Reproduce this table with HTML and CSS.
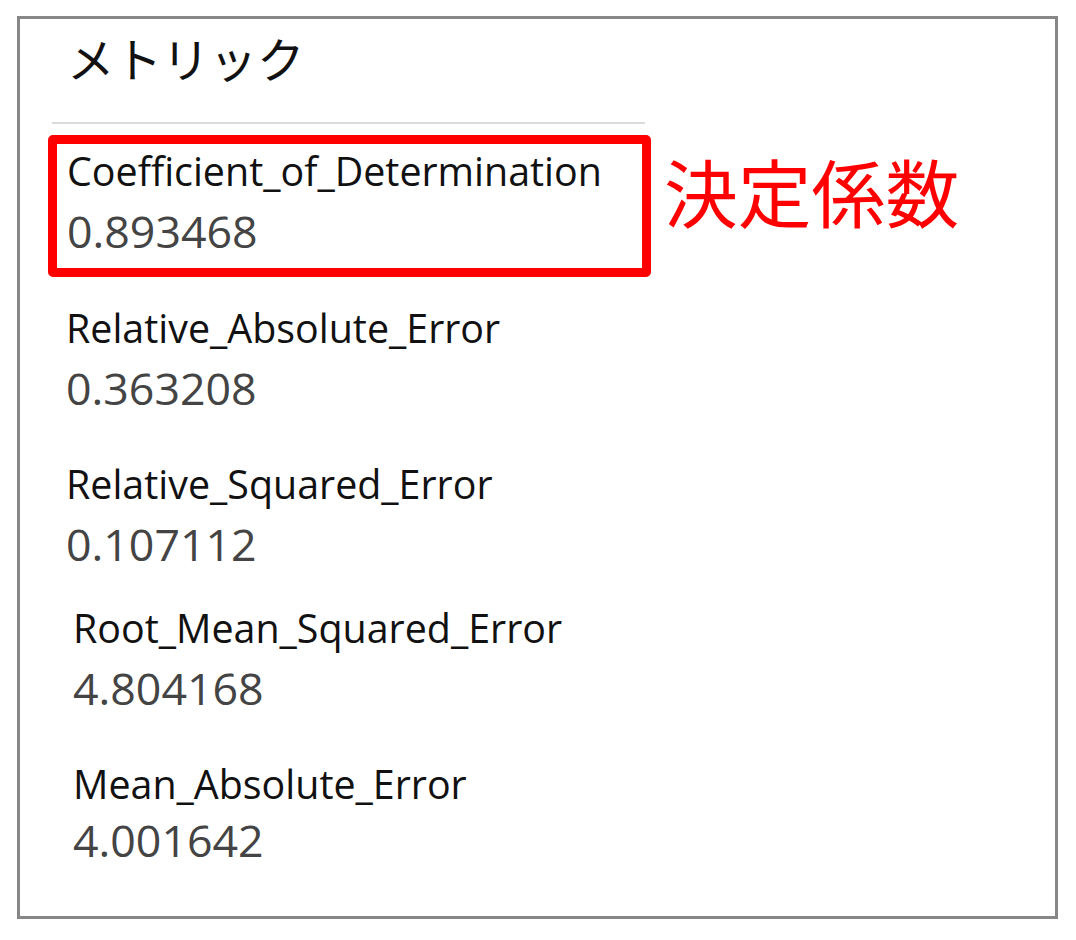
FILE: index.html
```html
<!DOCTYPE html>
<html lang="ja">
<head>
<meta charset="utf-8">
<title>メトリック</title>
<link rel="stylesheet" href="styles.css">
</head>
<body>
<div class="panel">
  <h1 class="title">メトリック</h1>
  <div class="rule"></div>
  <div class="highlight-row">
    <div class="metric metric--highlight">
      <div class="name">Coefficient_of_Determination</div>
      <div class="value">0.893468</div>
    </div>
    <div class="annotation">決定係数</div>
  </div>
  <div class="metric">
    <div class="name">Relative_Absolute_Error</div>
    <div class="value">0.363208</div>
  </div>
  <div class="metric metric--spaced">
    <div class="name">Relative_Squared_Error</div>
    <div class="value">0.107112</div>
  </div>
  <div class="metric metric--indent">
    <div class="name">Root_Mean_Squared_Error</div>
    <div class="value">4.804168</div>
  </div>
  <div class="metric metric--indent metric--spaced metric--compact">
    <div class="name">Mean_Absolute_Error</div>
    <div class="value">4.001642</div>
  </div>
</div>
</body>
</html>
```

FILE: styles.css
```css
html, body {
  margin: 0;
  padding: 0;
  background: #ffffff;
}

body {
  font-family: "Open Sans", "Noto Sans CJK JP", sans-serif;
}

.panel {
  box-sizing: border-box;
  margin: 16px 0 0 17px;
  width: 1041px;
  height: 903px;
  border: 3px solid #878787;
  background: #ffffff;
  display: flex;
  flex-direction: column;
  align-items: flex-start;
}

.title {
  margin: 15px 0 0 47px;
  font-family: "Noto Sans CJK JP", sans-serif;
  font-weight: 400;
  font-size: 47.5px;
  line-height: 47px;
  color: #111111;
}

.rule {
  margin: 41px 0 0 32px;
  width: 593px;
  height: 2px;
  background: #dadada;
}

.highlight-row {
  margin: 11px 0 0 28px;
  display: flex;
  align-items: flex-start;
  gap: 13px;
}

.metric {
  margin: 24px 0 0 46px;
  display: flex;
  flex-direction: column;
}

.metric--spaced {
  margin-top: 36px;
}

.metric--indent {
  margin-left: 53px;
}

.metric--highlight {
  box-sizing: border-box;
  margin: 0;
  width: 603px;
  border: 9px solid #ff0000;
  border-radius: 5px;
  padding: 0 10px 4px;
}

.name {
  font-size: 39.4px;
  line-height: 54px;
  color: #111111;
  white-space: nowrap;
}

.value {
  font-size: 44.7px;
  line-height: 66px;
  color: #444444;
}

.metric--compact .value {
  margin-top: -4px;
}

.annotation {
  margin-top: 18px;
  font-family: "Noto Sans CJK JP", sans-serif;
  font-size: 73.8px;
  line-height: 74px;
  color: #ff0000;
  white-space: nowrap;
}
```
